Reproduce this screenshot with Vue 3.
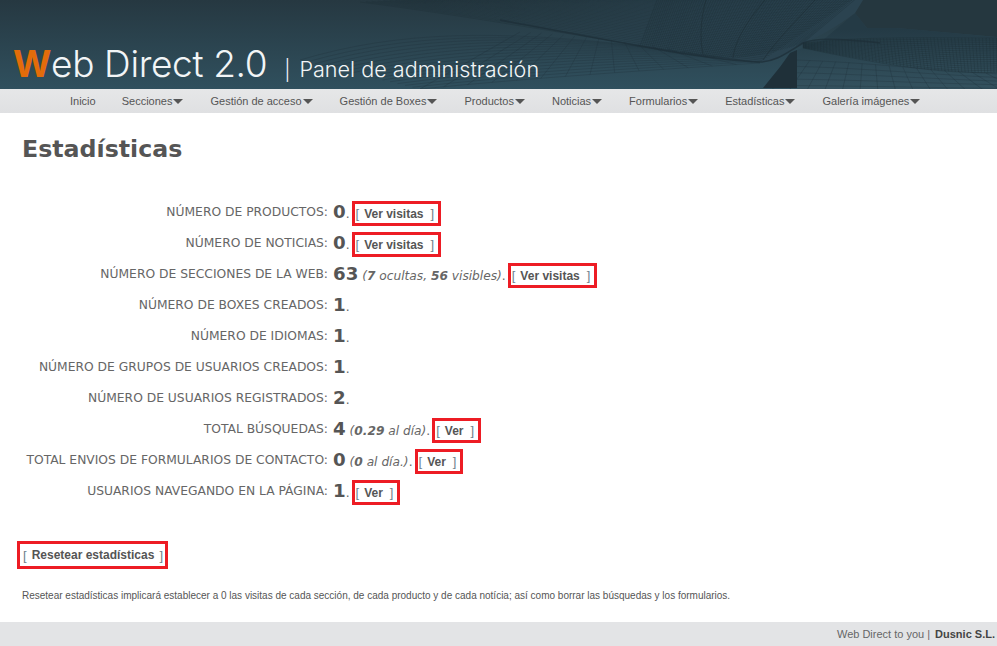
<script setup>
const menu = [
  { label: 'Inicio', arrow: false },
  { label: 'Secciones', arrow: true },
  { label: 'Gestión de acceso', arrow: true },
  { label: 'Gestión de Boxes', arrow: true },
  { label: 'Productos', arrow: true },
  { label: 'Noticias', arrow: true },
  { label: 'Formularios', arrow: true },
  { label: 'Estadísticas', arrow: true },
  { label: 'Galería imágenes', arrow: true }
]

const stats = [
  { label: 'Número de productos:', value: '0', link: 'Ver visitas' },
  { label: 'Número de noticias:', value: '0', link: 'Ver visitas' },
  { label: 'Número de secciones de la web:', value: '63', parts: ['7', ' ocultas, ', '56', ' visibles'], link: 'Ver visitas' },
  { label: 'Número de boxes creados:', value: '1' },
  { label: 'Número de idiomas:', value: '1' },
  { label: 'Número de grupos de usuarios creados:', value: '1' },
  { label: 'Número de usuarios registrados:', value: '2' },
  { label: 'Total búsquedas:', value: '4', parts: ['0.29', ' al día'], link: 'Ver' },
  { label: 'Total envios de formularios de contacto:', value: '0', parts: ['0', ' al día.'], link: 'Ver' },
  { label: 'Usuarios navegando en la página:', value: '1', link: 'Ver' }
]

// wire mesh of the header picture
function lerp(a, b, t) {
  return a + (b - a) * t
}
function bez(p, t) {
  const u = 1 - t
  return [
    u * u * u * p[0] + 3 * u * u * t * p[2] + 3 * u * t * t * p[4] + t * t * t * p[6],
    u * u * u * p[1] + 3 * u * u * t * p[3] + 3 * u * t * t * p[5] + t * t * t * p[7]
  ]
}
function curve(p) {
  return `M${p[0]} ${p[1]}C${p[2]} ${p[3]} ${p[4]} ${p[5]} ${p[6]} ${p[7]}`
}
function rows(a, b, n) {
  const out = []
  for (let i = 0; i <= n; i++) {
    out.push(curve(a.map((v, k) => lerp(v, b[k], i / n))))
  }
  return out.join('')
}
function cols(a, b, n) {
  const out = []
  for (let j = 0; j <= n; j++) {
    const s = bez(a, j / n)
    const e = bez(b, j / n)
    out.push(`M${s[0].toFixed(1)} ${s[1].toFixed(1)}L${e[0].toFixed(1)} ${e[1].toFixed(1)}`)
  }
  return out.join('')
}

const upperA = [360, 2, 500, 20, 640, 48, 760, 62]
const upperB = [620, -12, 700, -8, 800, -8, 864, -8]
const upperLines = rows(upperA, upperB, 44) + cols([640, 46, 690, 58, 740, 66, 803, 43], [660, -8, 710, -8, 790, -8, 864, -8], 80)

const rightA = [803, 43, 860, 36, 930, 38, 1000, 38]
const rightB = [803, 48, 860, 60, 940, 76, 1000, 72]
const rightLines = rows(rightA, rightB, 16) + cols(rightA, rightB, 60)

const lowerLeftLines = rows([420, 89, 530, 78, 650, 70, 760, 63], [300, 60, 400, 30, 500, 30, 640, 46], 16)
  + cols([420, 89, 530, 78, 650, 70, 760, 63], [520, 32, 570, 34, 620, 40, 700, 54], 14)

const lowerRightLines = rows([797, 60, 860, 62, 930, 70, 1000, 74], [797, 92, 860, 92, 930, 92, 1000, 92], 5)
  + cols([797, 60, 860, 62, 930, 70, 1000, 74], [770, 92, 860, 92, 950, 92, 1040, 92], 15)
</script>

<template>
  <div class="page">
    <header class="banner">
      <svg class="mesh" width="997" height="89" viewBox="0 0 997 89" aria-hidden="true">
        <defs>
          <linearGradient id="upperFade" gradientUnits="userSpaceOnUse" x1="430" y1="0" x2="700" y2="0">
            <stop offset="0" stop-color="#2a414c" stop-opacity="0" />
            <stop offset="1" stop-color="#2b4350" />
          </linearGradient>
          <linearGradient id="rightFade" gradientUnits="userSpaceOnUse" x1="0" y1="30" x2="0" y2="89">
            <stop offset="0" stop-color="#243a45" />
            <stop offset="1" stop-color="#34525f" />
          </linearGradient>
        </defs>
        <path d="M863 0L855 13L867 28L897 28L997 37V0Z" fill="#25373f" />
        <path d="M855 13L867 28L897 28L997 37V89H797V50L823 40Z" fill="url(#rightFade)" />
        <path d="M360 0H863L855 13C835 28 820 36 803 43C785 54 775 62 760 62C700 60 600 38 500 20C450 12 400 6 360 0Z" fill="url(#upperFade)" />
        <path :d="lowerLeftLines" class="line low" />
        <path :d="upperLines" class="line fine" />
        <path :d="rightLines" class="line fine" />
        <path :d="lowerRightLines" class="line low" />
        <path d="M500 20C600 38 700 60 760 62C775 62 785 54 803 43C815 38 835 38 880 43" class="edge" />
        <path d="M706 0C700 20 700 42 703 54M765 0C748 20 735 40 733 58M815 0C795 22 775 42 763 60" class="line far" />
        <path d="M790 53L797 50V88H763L780 67Z" fill="#1f3039" />
      </svg>
      <div class="brand">
        <span class="brand-name"><span class="brand-w">W</span>eb Direct 2.0</span>
        <span class="brand-sep">|</span>
        <span class="brand-sub">Panel de administración</span>
      </div>
    </header>

    <nav class="menu">
      <a v-for="item in menu" :key="item.label" class="menu-item">
        {{ item.label }}<i v-if="item.arrow" class="arrow"></i>
      </a>
    </nav>

    <main class="content">
      <h1>Estadísticas</h1>

      <div class="stats">
        <div v-for="row in stats" :key="row.label" class="row">
          <span class="label">{{ row.label }}</span>
          <span class="value">
            <b class="num">{{ row.value }}</b>
            <em v-if="row.parts" class="note"> (<template v-for="(part, i) in row.parts" :key="i"><b v-if="i % 2 === 0">{{ part }}</b><template v-else>{{ part }}</template></template>)</em>.
          </span>
          <a v-if="row.link" class="boxed"><span class="br">[</span><span class="txt">{{ row.link }}</span><span class="br">]</span></a>
        </div>
      </div>

      <a class="boxed reset"><span class="br">[</span><span class="txt">Resetear estadísticas</span><span class="br">]</span></a>

      <p class="legal">Resetear estadísticas implicará establecer a 0 las visitas de cada sección, de cada producto y de cada notícia; así como borrar las búsquedas y los formularios.</p>
    </main>

    <footer class="foot">
      <span>Web Direct to you |</span>
      <b>Dusnic S.L.</b>
    </footer>
  </div>
</template>

<style scoped>
.page {
  width: 997px;
  height: 646px;
  display: flex;
  flex-direction: column;
  overflow: hidden;
  background: #fff;
  color: #555;
  font-family: "Liberation Sans", Arial, sans-serif;
}
.banner {
  position: relative;
  height: 89px;
  flex: none;
  display: flex;
  align-items: flex-end;
  background: linear-gradient(#263841, #30505e);
}
.mesh {
  position: absolute;
  left: 0;
  top: 0;
}
.line {
  fill: none;
  stroke-width: 0.5;
}
.far {
  stroke: #1c2c34;
  stroke-width: 0.8;
  opacity: 0.7;
}
.fine {
  stroke: #1a2a32;
  opacity: 0.6;
}
.low {
  stroke: #1d2f38;
  opacity: 0.6;
}
.edge {
  fill: none;
  stroke: #1e2f38;
  stroke-width: 1.6;
  opacity: 0.75;
}
.brand {
  position: relative;
  display: flex;
  align-items: baseline;
  padding: 0 0 5px 13px;
  color: #f2f5f6;
  font-family: Inter, "Liberation Sans", sans-serif;
  font-weight: 300;
  white-space: nowrap;
}
.brand-name {
  font-size: 37px;
  line-height: 40px;
  letter-spacing: -0.35px;
}
.brand-w {
  color: #e36c0a;
  font-weight: 700;
}
.brand-sep {
  margin-left: 17px;
  font-size: 20px;
}
.brand-sub {
  margin-left: 9px;
  font-size: 21.6px;
}
.menu {
  height: 24px;
  flex: none;
  display: flex;
  align-items: center;
  padding: 0 0 1px 70px;
  gap: 27px;
  box-sizing: border-box;
  background: linear-gradient(#e6e7e8, #dfe0e2);
  font-size: 11px;
}
.menu-item {
  display: flex;
  align-items: center;
  color: #555;
  white-space: nowrap;
}
.menu-item:first-child {
  margin-right: -1px;
}
.arrow {
  width: 0;
  height: 0;
  margin: 2px 0 0 1px;
  border-left: 5px solid transparent;
  border-right: 5px solid transparent;
  border-top: 5px solid #555;
}
.content {
  flex: 1;
  padding: 0 22px;
}
h1 {
  margin: 21px 0 0;
  font-family: "DejaVu Sans", Verdana, sans-serif;
  font-size: 23.7px;
  line-height: 30px;
  font-weight: 700;
  color: #555;
}
.stats {
  margin: 32px 0 0 -22px;
  display: flex;
  flex-direction: column;
}
.row {
  height: 31px;
  display: flex;
  align-items: center;
  white-space: nowrap;
}
.label {
  width: 328px;
  flex: none;
  text-align: right;
  text-transform: uppercase;
  font-family: "DejaVu Sans", Verdana, sans-serif;
  font-size: 12.3px;
  color: #666;
}
.value {
  margin-left: 5px;
  font-family: "DejaVu Sans", Verdana, sans-serif;
  font-size: 12.2px;
  color: #666;
}
.num {
  font-size: 18.2px;
  color: #555;
}
.boxed {
  display: inline-flex;
  align-items: center;
  margin: 4px 0 0 2px;
  padding: 0 4px 0 1px;
  height: 19px;
  border: 3px solid #ed1c24;
  font-size: 12px;
  font-weight: 700;
  color: #555;
}
.txt {
  margin: 0 7px 0 5px;
}
.br {
  font-size: 13px;
  font-weight: 400;
  color: #6f7f8c;
}
.reset {
  margin: 35px 0 0 -5px;
  height: 22px;
  padding: 0 2px 0 3px;
}
.reset .txt {
  margin: 0 5px;
}
.legal {
  margin: 21px 0 0;
  font-size: 10px;
  color: #555;
}
.foot {
  height: 24px;
  flex: none;
  display: flex;
  justify-content: flex-end;
  align-items: center;
  gap: 5px;
  padding-right: 2px;
  background: #e3e4e6;
  font-size: 11px;
  color: #666;
}
.foot b {
  color: #444;
}
</style>
